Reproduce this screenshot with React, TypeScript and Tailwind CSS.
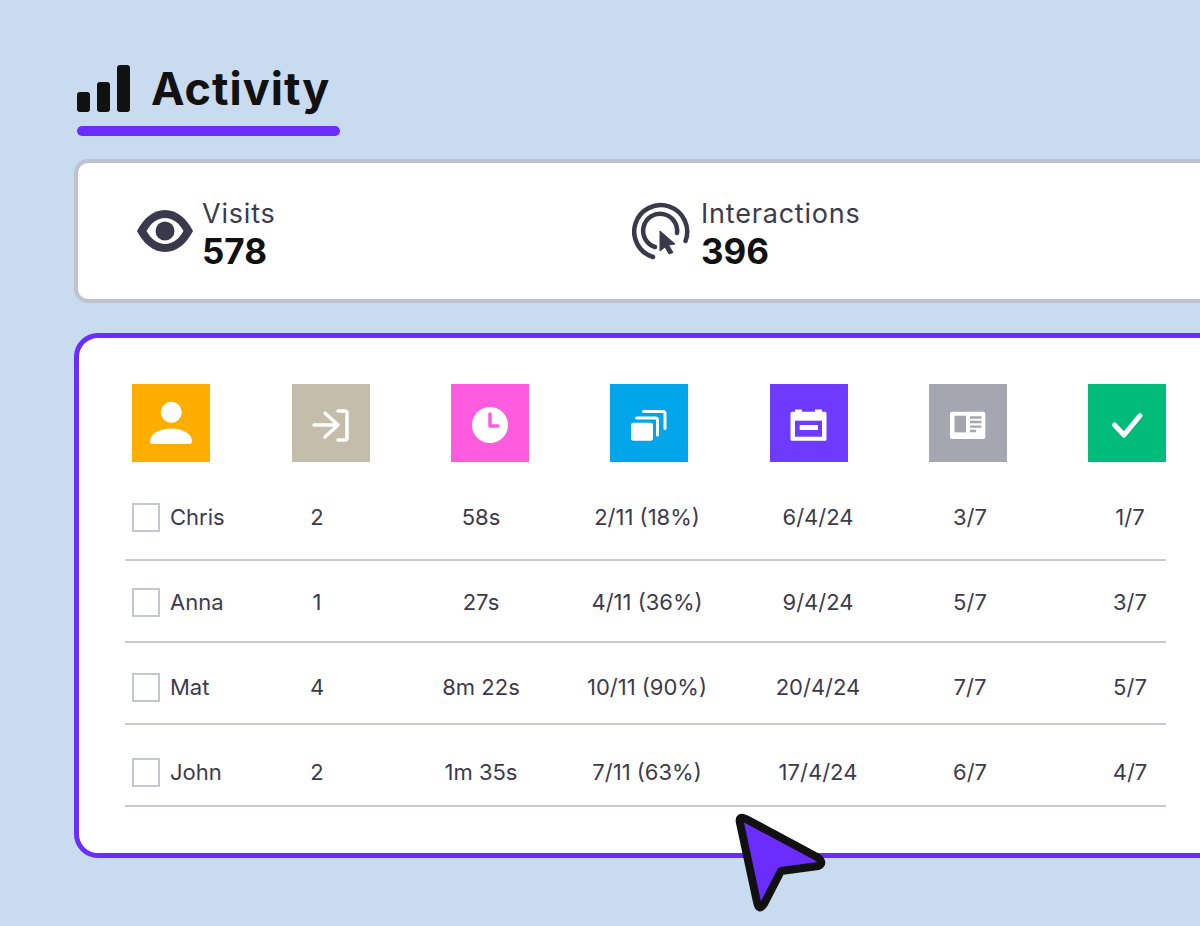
const rows = [
  { pad: 'pb-[4px]', cells: ['Chris', '2', '58s', '2/11 (18%)', '6/4/24', '3/7', '1/7'] },
  { pad: 'pt-[2px]', cells: ['Anna', '1', '27s', '4/11 (36%)', '9/4/24', '5/7', '3/7'] },
  { pad: 'pt-[8px]', cells: ['Mat', '4', '8m 22s', '10/11 (90%)', '20/4/24', '7/7', '5/7'] },
  { pad: 'pt-[14px]', cells: ['John', '2', '1m 35s', '7/11 (63%)', '17/4/24', '6/7', '4/7'] },
]

function Tile({ color, children }: { color: string; children: React.ReactNode }) {
  return (
    <div className={`h-[78px] w-[78px] ${color}`}>
      <svg viewBox="0 0 78 78" className="h-full w-full">
        {children}
      </svg>
    </div>
  )
}

function HeaderIcons() {
  return (
    <div className="ml-[7.4px] flex w-[1034px] justify-between">
      <Tile color="bg-[#ffae00]">
        <circle cx="39.3" cy="28.3" r="10.5" fill="#fff" />
        <path d="M18 57.5C18 50 27 44.500 39 44.500S60 50 60 57.500C60 59 59 60 57.500 60H20.500C19 60 18 59 18 57.500Z" fill="#fff" />
      </Tile>
      <Tile color="bg-[#c3bdaa]">
        <g fill="none" stroke="#fff" strokeWidth="3.5" strokeLinecap="round" strokeLinejoin="round">
          <path d="M22 41H46M33 29L46 41L33 53" />
          <path d="M46 27H53Q55 27 55 29V54Q55 56 53 56H46" />
        </g>
      </Tile>
      <Tile color="bg-[#ff5bdf]">
        <circle cx="39" cy="41" r="18" fill="#fff" />
        <path d="M39 30V42H47" fill="none" stroke="#ff5bdf" strokeWidth="3.5" strokeLinecap="round" strokeLinejoin="round" />
      </Tile>
      <Tile color="bg-[#00a5ea]">
        <rect x="21" y="38.700" width="22" height="18" rx="2.500" fill="#fff" />
        <path d="M26.500 34H45.500Q47.500 34 47.500 36V51M33.500 27.500H53Q55 27.500 55 29.500V44.500" fill="none" stroke="#fff" strokeWidth="3" strokeLinecap="round" />
      </Tile>
      <Tile color="bg-[#6f3aff]">
        <path d="M25 25.500H32V27.700H45V25.500H52V27.700H55Q56.500 27.700 56.500 29.200V55.200Q56.500 56.700 55 56.700H22Q20.500 56.700 20.500 55.200V29.200Q20.500 27.700 22 27.700H25Z" fill="#fff" />
        <rect x="25" y="36.700" width="27" height="16" fill="#6f3aff" />
        <rect x="29.700" y="41" width="18.300" height="5" fill="#fff" />
      </Tile>
      <Tile color="bg-[#a4a7b0]">
        <rect x="21" y="27.700" width="35.300" height="27.300" rx="2" fill="#fff" />
        <rect x="25.500" y="31.700" width="11.500" height="16.700" fill="#a4a7b0" />
        <path d="M41 33.500H52.500M41 38H52.500M41 42.700H52.500M41 47H47" stroke="#a4a7b0" strokeWidth="2.300" />
      </Tile>
      <Tile color="bg-[#00bb7a]">
        <path d="M26.500 41L36 51L52 31.700" fill="none" stroke="#fff" strokeWidth="5" strokeLinecap="round" strokeLinejoin="round" />
      </Tile>
    </div>
  )
}

function Stat({ label, value, className, children }: { label: string; value: string; className: string; children: React.ReactNode }) {
  return (
    <div className={`flex items-center ${className}`}>
      {children}
      <div className="flex flex-col pt-[9px]">
        <span className="text-[27px] leading-[30px] tracking-[0.8px] text-[#3c3b4d]">{label}</span>
        <span className="mt-[1px] text-[35px] leading-[42px] font-bold text-[#111111]">{value}</span>
      </div>
    </div>
  )
}

export default function App() {
  return (
    <div className="relative h-[926px] w-[1200px] overflow-hidden bg-[#c8dbef] pt-[62px] pl-[74px] font-['Inter',sans-serif]">
      <div className="w-fit pl-[3px]">
        <div className="flex items-center gap-[21px]">
          <svg width="53" height="47" viewBox="0 0 53 47" fill="#111111">
            <rect x="0" y="27" width="13" height="20" rx="3" />
            <rect x="20" y="17" width="13" height="30" rx="3" />
            <rect x="40" y="0" width="13" height="47" rx="3" />
          </svg>
          <h1 className="pt-[1px] text-[45px] leading-[52px] font-bold tracking-[1px] text-[#111111]">Activity</h1>
        </div>
        <div className="mt-[11px] h-[10px] w-[263px] rounded-full bg-[#6b2dff]" />
      </div>

      <div className="mt-[23px] flex h-[144px] w-[1200px] rounded-[14px] border-4 border-[#bec3cf] bg-white pl-[59px]">
        <Stat label="Visits" value="578" className="w-[495px] gap-[9px]">
          <svg width="56" height="42" viewBox="0 0 56 42">
            <path d="M0 21C6 9 16 0 28 0S50 9 56 21C50 33 40 42 28 42S6 33 0 21Z" fill="#3a394c" />
            <path d="M9.500 21C14 13 20.500 8 28 8S42 13 46.500 21C42 29 35.500 34 28 34S14 29 9.500 21Z" fill="#fff" />
            <circle cx="28" cy="21" r="9.500" fill="#3a394c" />
          </svg>
        </Stat>
        <Stat label="Interactions" value="396" className="gap-[11px]">
          <svg width="58" height="58" viewBox="0 0 58 58" fill="none">
            <g stroke="#3a394c" strokeWidth="4.500" strokeLinecap="round">
              <path d="M21 55A26.500 26.500 0 1 1 53.500 39" />
              <path d="M23 45A17 17 0 1 1 45 31" />
            </g>
            <path d="M28 29L43 42L36.500 43L41 50.500L37 52L33 45L28 49Z" fill="#3a394c" stroke="#3a394c" strokeWidth="1" strokeLinejoin="round" />
          </svg>
        </Stat>
      </div>

      <div className="mt-[30px] h-[525px] w-[1200px] rounded-[24px] border-[5px] border-[#6b2dff] bg-white pt-[46px] pl-[46px]">
        <div className="w-[1041px]">
          <HeaderIcons />
          <div className="mt-[17px] flex flex-col text-[22px] text-[#3c3b4d]">
            {rows.map(({ pad, cells }) => (
              <div key={cells[0]} className={`grid h-[82px] grid-cols-[132px_120px_208px_124px_218px_86px_153px] items-center border-b-2 border-[#c9c9d6] ${pad}`}>
                <div className="flex items-center gap-[10px] pl-[7px]">
                  <span className="h-[29px] w-[28px] border-2 border-[#c4c7d2]" />
                  <span>{cells[0]}</span>
                </div>
                {cells.slice(1, 6).map((cell, i) => (
                  <span key={i} className="text-center">{cell}</span>
                ))}
                <span className="pl-[81px] text-center">{cells[6]}</span>
              </div>
            ))}
          </div>
        </div>
      </div>

      <svg className="absolute top-[810px] left-[730px]" width="100" height="106" viewBox="730 810 100 106">
        <path d="M740 823Q738 815 746 819L817 857Q825 863 818 866L781 871L764 904Q759 912 757 902Z" fill="#6b2dff" stroke="#111111" strokeWidth="8" strokeLinejoin="round" />
      </svg>
    </div>
  )
}
